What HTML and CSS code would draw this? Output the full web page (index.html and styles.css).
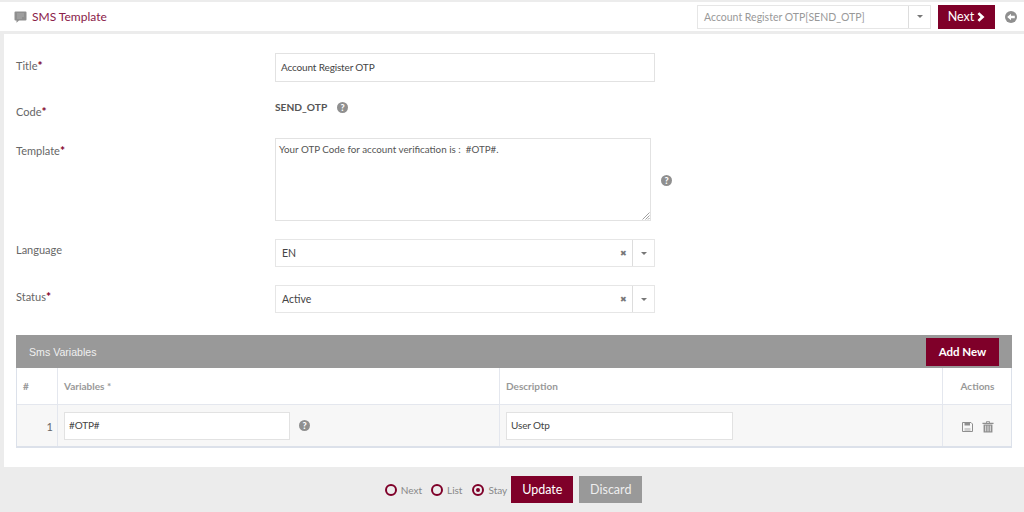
FILE: index.html
```html
<!DOCTYPE html>
<html lang="en">
<head>
<meta charset="utf-8">
<title>SMS Template</title>
<link rel="stylesheet" href="styles.css">
</head>
<body>
<header class="topbar">
  <div class="title-wrap">
    <svg class="title-icon" width="13" height="12" viewBox="0 0 13 12"><path d="M1.500 0.500h10a1 1 0 0 1 1 1v7a1 1 0 0 1-1 1H5l-2.500 2.200V9.500h-1a1 1 0 0 1-1-1v-7a1 1 0 0 1 1-1z" fill="#8f8f8f"/><path d="M3 3h7M3 5h7M3 7h5" stroke="#b5b5b5" stroke-width="0.800"/></svg>
    <h1 class="page-title">SMS Template</h1>
  </div>
  <div class="top-actions">
    <div class="top-select">
      <span class="top-select-text">Account Register OTP[SEND_OTP]</span>
      <span class="top-select-arrow"><i class="caret"></i></span>
    </div>
    <button class="btn btn-primary btn-next">Next
      <svg width="8" height="10" viewBox="0 0 8 10"><path d="M2.300 0.300L7.500 5l-5.200 4.700L0.500 8l3-3-3-3z" fill="#fff"/></svg>
    </button>
    <svg class="back-icon" width="12" height="12" viewBox="0 0 12 12"><circle cx="6" cy="6" r="6" fill="#8f8f8f"/><path d="M2.200 6L6 2.800V4.800H9.800V7.200H6V9.200z" fill="#fff"/></svg>
  </div>
</header>

<main class="card">
  <form class="form">
    <div class="row row-title">
      <label class="label">Title<b class="req">*</b></label>
      <div class="input input-title">Account Register OTP</div>
    </div>
    <div class="row row-code">
      <label class="label">Code<b class="req">*</b></label>
      <div class="code-value">SEND_OTP <span class="help help-code">?</span></div>
    </div>
    <div class="row row-template">
      <label class="label">Template<b class="req">*</b></label>
      <div class="textarea">Your OTP Code for account verification is :  #OTP#.
        <svg class="grip" width="8" height="8" viewBox="0 0 8 8"><path d="M7.500 0.500L0.500 7.500M7.500 3.500L3.500 7.500M7.500 6L6 7.500" stroke="#888" stroke-width="0.800"/></svg>
      </div>
      <span class="help help-template">?</span>
    </div>
    <div class="row row-select row-language">
      <label class="label">Language</label>
      <div class="select"><span class="select-text">EN</span><span class="clear">✖</span><span class="select-arrow"><i class="caret"></i></span></div>
    </div>
    <div class="row row-select row-status">
      <label class="label">Status<b class="req">*</b></label>
      <div class="select"><span class="select-text">Active</span><span class="clear">✖</span><span class="select-arrow"><i class="caret"></i></span></div>
    </div>
  </form>

  <section class="panel">
    <div class="panel-head">
      <span class="panel-title">Sms Variables</span>
      <button class="btn btn-primary btn-add">Add New</button>
    </div>
    <div class="grid grid-head">
      <div class="cell">#</div>
      <div class="cell">Variables *</div>
      <div class="cell">Description</div>
      <div class="cell cell-center">Actions</div>
    </div>
    <div class="grid grid-body">
      <div class="cell cell-num">1</div>
      <div class="cell cell-var"><div class="input input-var">#OTP#</div><span class="help">?</span></div>
      <div class="cell"><div class="input input-desc">User Otp</div></div>
      <div class="cell cell-actions">
        <svg width="11" height="10" viewBox="0 0 11 10"><path d="M0.500 0.500H9L10.500 2V9.500H0.500z" fill="none" stroke="#8f8f8f" stroke-width="1"/><path d="M2.500 1H8V3.500H2.500z" fill="#8f8f8f"/><path d="M2.500 6H8.500V9H2.500z" fill="#cfcfcf"/></svg>
        <svg width="12" height="12" viewBox="0 0 12 13"><path d="M0 2H12V3.200H0zM4 0.300H8V2H7V1.200H5V2H4zM1.200 3.800H10.800V12.500H1.200z" fill="#8f8f8f"/><path d="M3.500 5V11.200M6 5V11.200M8.500 5V11.200" stroke="#f7f7f7" stroke-width="0.900"/></svg>
      </div>
    </div>
  </section>
</main>

<footer class="footer">
  <label class="radio"><i class="dot"></i>Next</label>
  <label class="radio"><i class="dot"></i>List</label>
  <label class="radio"><i class="dot dot-on"></i>Stay</label>
  <button class="btn btn-primary btn-update">Update</button>
  <button class="btn btn-gray">Discard</button>
</footer>
</body>
</html>
```
FILE: styles.css
```css
* { box-sizing: border-box; }
html, body { margin: 0; padding: 0; }
body {
  width: 1024px;
  height: 512px;
  overflow: hidden;
  background: #ececec;
  font-family: Lato, "Open Sans", sans-serif;
  font-size: 10.500px;
  color: #555;
  padding-top: 2px;
  display: flex;
  flex-direction: column;
}
.topbar {
  height: 29px;
  background: #fff;
  display: flex;
  align-items: center;
  justify-content: space-between;
  padding: 0 7px 0 14px;
}
.title-wrap { display: flex; align-items: center; gap: 5px; margin-top: -1px; }
.title-icon { margin-top: 2px; }
.page-title { margin: 0; font-size: 12px; font-weight: 400; color: #8a2048; }
.top-actions { display: flex; align-items: center; }
.top-select {
  width: 234px;
  height: 24px;
  border: 1px solid #e6e6e6;
  display: flex;
  align-items: center;
  justify-content: space-between;
  color: #999;
}
.top-select-text { padding-left: 6px; }
.top-select-arrow, .select-arrow {
  width: 22px;
  height: 100%;
  border-left: 1px solid #ddd;
  display: flex;
  align-items: center;
  justify-content: center;
}
.caret {
  width: 0;
  height: 0;
  border-left: 3.500px solid transparent;
  border-right: 3.500px solid transparent;
  border-top: 3.500px solid #777;
}
.btn {
  border: 0;
  font-family: inherit;
  color: #fff;
  display: inline-flex;
  align-items: center;
  justify-content: center;
}
.btn-primary { background: #7f0029; }
.btn-next {
  width: 57px;
  height: 24px;
  margin-left: 7px;
  font-size: 12.500px;
  gap: 3px;
}
.back-icon { margin-left: 10px; }
.card {
  margin: 3px 0 0 4px;
  height: 433px;
  background: #fff;
  padding: 19px 12px 0;
}
.form { display: flex; flex-direction: column; height: 282px; }
.row { display: flex; position: relative; align-items: flex-start; }
.label { width: 259px; flex: none; font-size: 11px; color: #666; }
.req { color: #7f0029; font-size: 12px; }
.input {
  border: 1px solid #e2e2e2;
  background: #fff;
  color: #444;
  display: flex;
  align-items: center;
  padding: 0 0 2px 5px;
  font-size: 10px;
  letter-spacing: -0.150px;
}
.row-title { height: 29px; }
.row-title .label { padding-top: 5px; }
.input-title { width: 380px; height: 29px; }
.row-code { margin-top: 16px; height: 17px; }
.row-code .label { padding-top: 6px; }
.code-value { font-weight: 700; font-size: 10.200px; color: #555; display: flex; align-items: center; padding-top: 3px; }
.help {
  width: 11px;
  height: 11px;
  border-radius: 50%;
  background: #8f8f8f;
  color: #fff;
  font-size: 9px;
  font-weight: 900;
  line-height: 11px;
  text-align: center;
  display: inline-block;
  flex: none;
  letter-spacing: 0;
}
.help-code { margin-left: 10px; }
.row-template { margin-top: 23px; height: 83px; }
.row-template .label { padding-top: 5px; }
.textarea {
  width: 376px;
  height: 83px;
  border: 1px solid #e2e2e2;
  padding: 4px 3px;
  color: #555;
  font-size: 9.800px;
  line-height: 12px;
  white-space: pre-wrap;
  position: relative;
}
.grip { position: absolute; right: 0; bottom: 0; }
.help-template { margin: 37px 0 0 10px; }
.row-select { height: 28px; }
.row-language { margin-top: 18px; }
.row-status { margin-top: 18px; }
.row-select .label { padding-top: 4px; }
.select {
  width: 380px;
  height: 28px;
  border: 1px solid #e6e6e6;
  display: flex;
  align-items: center;
  color: #444;
  font-size: 10.500px;
}
.select-text { flex: 1; padding-left: 6px; }
.clear { color: #777; font-size: 8px; margin-right: 5px; }
.panel {
  width: 996px;
  border: 1px solid #dce1ea;
  border-top: 0;
  background: #fff;
}
.panel-head {
  height: 33px;
  background: #999;
  margin: 0 -1px;
  display: flex;
  align-items: center;
  justify-content: space-between;
  padding: 0 13px 0 13px;
  color: #f0f0f0;
}
.panel-title { font-family: "Liberation Sans", Arial, sans-serif; font-size: 10.600px; }
.btn-add { width: 73px; height: 28px; font-size: 11.500px; font-weight: 700; }
.grid {
  display: grid;
  grid-template-columns: 41px 442px 443px 1fr;
}
.grid-head { height: 37px; color: #999; font-weight: 700; font-size: 10px; border-bottom: 1px solid #e4e7ee; }
.grid-body { height: 42px; background: #f7f7f7; border-bottom: 1px solid #dce1ea; }
.cell {
  border-right: 1px solid #e4e7ee;
  display: flex;
  align-items: center;
  padding-left: 6px;
}
.cell:last-child { border-right: 0; padding-left: 1px; }
.cell-center { justify-content: center; }
.cell-num { justify-content: flex-end; padding: 2px 4px 0 0; font-size: 11px; color: #666; }
.cell-var { gap: 9px; }
.input-var { width: 226px; height: 28px; padding-left: 4px; }
.input-desc { width: 227px; height: 28px; padding-left: 4px; }
.cell-actions { justify-content: center; gap: 9px; padding-top: 2px; }
.footer {
  flex: 1;
  display: flex;
  align-items: center;
  justify-content: center;
  padding-left: 3px;
}
.radio { display: flex; align-items: center; gap: 4px; color: #888; font-size: 10px; margin-right: 9px; }
.radio:nth-child(2) { margin-right: 10px; }
.radio:nth-child(3) { margin-right: 4px; }
.dot {
  width: 12px;
  height: 12px;
  border: 2px solid #7f0029;
  border-radius: 50%;
  display: block;
  position: relative;
}
.dot-on::after {
  content: "";
  position: absolute;
  inset: 2px;
  background: #7f0029;
  border-radius: 50%;
}
.btn-update { width: 62px; height: 27px; font-size: 12.500px; }
.btn-gray { width: 63px; height: 27px; margin-left: 6px; background: #999; font-size: 12.500px; color: #eee; }
```
